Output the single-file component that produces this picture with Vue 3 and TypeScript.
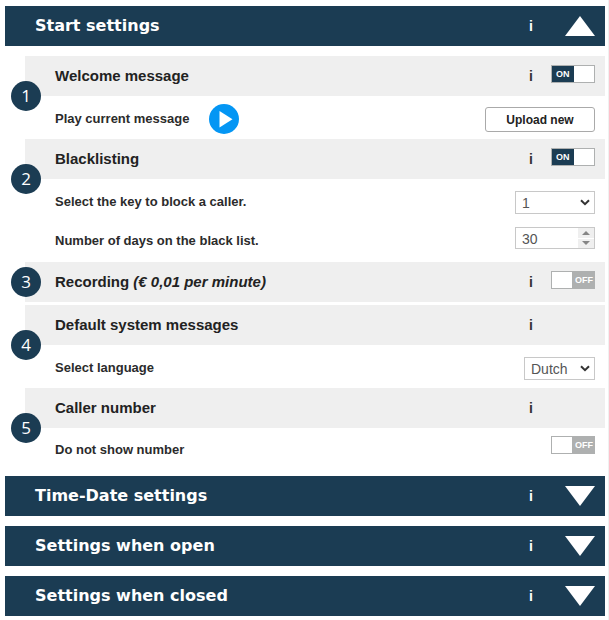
<script setup lang="ts">
import { ref } from 'vue'

interface Panel {
  id: string
  title: string
}

const startOpen = ref(true)
const welcomeOn = ref(true)
const blacklistOn = ref(true)
const recordingOn = ref(false)
const hideNumber = ref(false)
const blockKey = ref('1')
const days = ref(30)
const language = ref('Dutch')

const keys: string[] = ['1', '2', '3', '4', '5', '6', '7', '8', '9']
const languages: string[] = ['Dutch', 'English', 'German', 'French']
const panels: Panel[] = [
  { id: 'time', title: 'Time-Date settings' },
  { id: 'open', title: 'Settings when open' },
  { id: 'closed', title: 'Settings when closed' },
]

function step(amount: number): void {
  days.value = Math.max(0, days.value + amount)
}
</script>

<template>
  <main class="page">
    <header class="bar">
      <h2 class="bar-title">Start settings</h2>
      <div class="actions">
        <button type="button" class="info">i</button>
        <button type="button" class="fold" :aria-expanded="startOpen" aria-label="Start settings" @click="startOpen = !startOpen">
          <svg viewBox="0 0 30 20" width="30" height="20"><path d="M15 0 30 20H0z" fill="#fff" /></svg>
        </button>
      </div>
    </header>

    <div v-if="startOpen" class="sections">
      <section class="section">
        <div class="head">
          <h3 class="head-title">Welcome message</h3>
          <div class="actions">
            <button type="button" class="info">i</button>
            <label class="toggle">
              <input v-model="welcomeOn" type="checkbox" aria-label="Welcome message" />
              <span class="track">{{ welcomeOn ? 'ON' : 'OFF' }}</span>
            </label>
          </div>
          <span class="badge">1</span>
        </div>
        <div class="row">
          <div class="play-group">
            <span class="label">Play current message</span>
            <button type="button" class="play" aria-label="Play current message">
              <svg viewBox="0 0 30 30" width="30" height="30">
                <circle cx="15" cy="15" r="15" fill="#0496f4" />
                <path d="M10.5 7v16.5L23.5 15.2z" fill="#fff" />
              </svg>
            </button>
          </div>
          <button type="button" class="upload">Upload new</button>
        </div>
      </section>

      <section class="section">
        <div class="head">
          <h3 class="head-title">Blacklisting</h3>
          <div class="actions">
            <button type="button" class="info">i</button>
            <label class="toggle">
              <input v-model="blacklistOn" type="checkbox" aria-label="Blacklisting" />
              <span class="track">{{ blacklistOn ? 'ON' : 'OFF' }}</span>
            </label>
          </div>
          <span class="badge">2</span>
        </div>
        <div class="row">
          <label class="label" for="block-key">Select the key to block a caller.</label>
          <div class="select wide">
            <select id="block-key" v-model="blockKey">
              <option v-for="key in keys" :key="key">{{ key }}</option>
            </select>
            <svg class="chevron" viewBox="0 0 10 7" width="10" height="7"><path d="M1 1.2 5 5.2 9 1.2" /></svg>
          </div>
        </div>
        <div class="row short">
          <label class="label" for="days">Number of days on the black list.</label>
          <div class="number">
            <input id="days" v-model.number="days" type="number" min="0" />
            <div class="steps">
              <button type="button" aria-label="Increase" @click="step(1)">
                <svg viewBox="0 0 8 4" width="8" height="4"><path d="M4 0 8 4H0z" /></svg>
              </button>
              <button type="button" aria-label="Decrease" @click="step(-1)">
                <svg viewBox="0 0 8 4" width="8" height="4"><path d="M0 0H8L4 4z" /></svg>
              </button>
            </div>
          </div>
        </div>
      </section>

      <section class="section spaced">
        <div class="head">
          <h3 class="head-title">Recording <em>(€ 0,01 per minute)</em></h3>
          <div class="actions">
            <button type="button" class="info">i</button>
            <label class="toggle">
              <input v-model="recordingOn" type="checkbox" aria-label="Recording" />
              <span class="track">{{ recordingOn ? 'ON' : 'OFF' }}</span>
            </label>
          </div>
          <span class="badge centered">3</span>
        </div>
      </section>

      <section class="section">
        <div class="head">
          <h3 class="head-title">Default system messages</h3>
          <div class="actions">
            <button type="button" class="info">i</button>
          </div>
          <span class="badge">4</span>
        </div>
        <div class="row">
          <label class="label" for="language">Select language</label>
          <div class="select">
            <select id="language" v-model="language">
              <option v-for="name in languages" :key="name">{{ name }}</option>
            </select>
            <svg class="chevron" viewBox="0 0 10 7" width="10" height="7"><path d="M1 1.2 5 5.2 9 1.2" /></svg>
          </div>
        </div>
      </section>

      <section class="section">
        <div class="head">
          <h3 class="head-title">Caller number</h3>
          <div class="actions">
            <button type="button" class="info">i</button>
          </div>
          <span class="badge">5</span>
        </div>
        <div class="row top">
          <label class="label" for="hide-number">Do not show number</label>
          <label class="toggle">
            <input id="hide-number" v-model="hideNumber" type="checkbox" />
            <span class="track">{{ hideNumber ? 'ON' : 'OFF' }}</span>
          </label>
        </div>
      </section>
    </div>

    <div class="panels">
      <header v-for="panel in panels" :key="panel.id" class="bar">
        <h2 class="bar-title">{{ panel.title }}</h2>
        <div class="actions">
          <button type="button" class="info">i</button>
          <button type="button" class="fold" aria-expanded="false" :aria-label="panel.title">
            <svg viewBox="0 0 30 20" width="30" height="20"><path d="M0 0H30L15 20z" fill="#fff" /></svg>
          </button>
        </div>
      </header>
    </div>
  </main>
</template>

<style>
body {
  margin: 0;
  background: #fff;
}
</style>

<style scoped>
.page,
.page * {
  box-sizing: border-box;
}

.page {
  min-height: 100vh;
  padding: 6px 3px 4px 5px;
  border-right: 1px solid #f0f0f0;
  font-family: "Liberation Sans", Arial, sans-serif;
  color: #222;
}

button {
  margin: 0;
  padding: 0;
  border: 0;
  background: none;
  color: inherit;
  font: inherit;
  cursor: pointer;
}

svg {
  display: block;
}

.bar {
  display: flex;
  align-items: center;
  justify-content: space-between;
  height: 40px;
  padding: 0 10px 0 30px;
  background: #1b3c53;
  color: #fff;
}

.bar-title {
  margin: 0;
  font: bold 16px/20px "DejaVu Sans", Verdana, sans-serif;
}

.actions {
  display: grid;
  grid-template-columns: 20px 44px;
  gap: 10px;
  align-items: center;
}

.info {
  height: 20px;
  font-size: 14px;
  font-weight: bold;
  line-height: 20px;
  text-align: center;
}

.head .info {
  color: #333;
}

.fold {
  justify-self: end;
}

.sections {
  padding: 10px 0 0 20px;
}

.spaced {
  margin-bottom: 3px;
}

.head {
  position: relative;
  display: flex;
  align-items: center;
  justify-content: space-between;
  height: 40px;
  padding: 0 10px 0 30px;
  background: #efefef;
}

.head-title {
  margin: 0;
  font-size: 15px;
  line-height: 20px;
}

.badge {
  position: absolute;
  left: -14px;
  bottom: -15px;
  width: 30px;
  height: 30px;
  border-radius: 50%;
  background: #1b3c53;
  color: #fff;
  font: 17px/29px "Open Sans", "Noto Sans", sans-serif;
  text-align: center;
}

.badge.centered {
  bottom: 5px;
}

.row {
  display: flex;
  align-items: center;
  justify-content: space-between;
  height: 43px;
  padding: 2px 10px 0 30px;
}

.row.short {
  height: 40px;
  padding: 0 10px 8px 30px;
}

.row.short .label {
  padding-top: 6px;
}

.row.top {
  align-items: flex-start;
  height: 48px;
  padding: 8px 10px 0 30px;
}

.row.top .label {
  padding-top: 4px;
}

.label {
  color: #2b2b2b;
  font-size: 13px;
  font-weight: bold;
  line-height: 20px;
}

.play-group {
  display: flex;
  align-items: center;
  gap: 20px;
}

.upload {
  width: 110px;
  height: 25px;
  margin-top: 2px;
  border: 1px solid #aaa;
  border-radius: 3px;
  background: #fff;
  font-size: 12px;
  font-weight: bold;
}

.toggle {
  position: relative;
  display: block;
  width: 44px;
  height: 18px;
  cursor: pointer;
}

.head .toggle {
  margin-bottom: 4px;
}

.toggle input {
  position: absolute;
  inset: 0;
  width: 100%;
  height: 100%;
  margin: 0;
  opacity: 0;
}

.track {
  display: block;
  height: 18px;
  padding-right: 1px;
  border: 1px solid #aeb0b0;
  background: linear-gradient(to right, #fff 20px, #aeb0b0 20px);
  color: #fff;
  font-size: 9px;
  font-weight: bold;
  line-height: 17px;
  text-align: right;
}

.toggle input:checked + .track {
  padding-left: 4px;
  background: linear-gradient(to right, #1b3c53 22px, #fff 22px);
  text-align: left;
}

.select,
.number {
  position: relative;
}

.select {
  margin-top: 2px;
}

select {
  display: block;
  width: 71px;
  height: 23px;
  padding: 0 20px 0 6px;
  border: 1px solid #c8c8c8;
  border-radius: 0;
  appearance: none;
  background: #fff;
  color: #555;
  font: 14px/20px "Liberation Sans", Arial, sans-serif;
}

.wide select {
  width: 80px;
}

.chevron {
  position: absolute;
  top: 8px;
  right: 5px;
  fill: none;
  stroke: #333;
  stroke-width: 2;
  pointer-events: none;
}

.number input {
  display: block;
  width: 80px;
  height: 22px;
  padding: 1px 18px 0 6px;
  border: 1px solid #c8c8c8;
  border-radius: 0;
  appearance: textfield;
  background: #fff;
  color: #555;
  font: 14px/20px "Liberation Sans", Arial, sans-serif;
}

.number input::-webkit-inner-spin-button {
  display: none;
}

.steps {
  position: absolute;
  top: 1px;
  right: 1px;
  bottom: 1px;
  display: grid;
  grid-template-rows: 1fr 1fr;
  gap: 1px;
  width: 16px;
}

.steps button {
  display: grid;
  place-items: center;
  background: #efefef;
}

.steps path {
  fill: #858585;
}

.panels {
  display: grid;
  gap: 10px;
}
</style>
